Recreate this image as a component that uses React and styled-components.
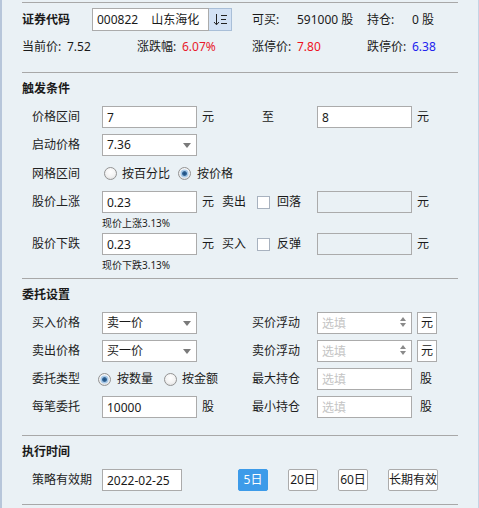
import React from 'react';
import styled, { createGlobalStyle } from 'styled-components';

const GlobalStyle = createGlobalStyle`
  html, body { margin: 0; padding: 0; background: #eaf1f5; }
  body {
    font-family: "Noto Sans", "Noto Sans CJK SC", sans-serif;
    font-size: 12px;
    color: #1a1a1a;
  }
  * { box-sizing: border-box; }
`;

const Panel = styled.div`
  width: 479px;
  height: 508px;
  background: #eaf1f5;
  border-left: 2px solid #b7c6da;
  border-right: 1px solid #c5d3e4;
  padding: 2px 0 0 20px;
  overflow: hidden;
`;

const Inner = styled.div`
  width: 436px;
`;

const Section = styled.section`
  border-top: 1px solid #a8a8a8;
  padding: ${p => (p.$pt ?? 8)}px 0 ${p => p.$pb}px;
  ${p => p.$last && 'border-bottom: 1px solid #a8a8a8;'}
`;

const Title = styled.div`
  font-weight: bold;
  line-height: 16px;
  margin-bottom: 9px;
`;

const Stack = styled.div`
  display: flex;
  flex-direction: column;
  gap: 6px;
`;

/* header */
const HeadRow1 = styled.div`
  display: grid;
  grid-template-columns: 70px 160px 115px auto;
  align-items: center;
  height: 23px;
`;

const HeadRow2 = styled.div`
  display: grid;
  grid-template-columns: repeat(4, 115px);
  align-items: center;
  height: 16px;
  margin-top: 8px;
`;

const BoldLabel = styled.span`
  font-weight: bold;
  line-height: 16px;
`;

const Info = styled.div`
  display: flex;
  align-items: center;
  line-height: 16px;
  white-space: nowrap;
`;

const InfoLabel = styled.span`
  width: 45px;
  flex: none;
`;

const InfoValue = styled.span`
  color: ${p => p.$color || '#1a1a1a'};
`;

const CodeGroup = styled.div`
  display: flex;
  height: 23px;
`;

const CodeBox = styled.div`
  width: 117px;
  height: 23px;
  border: 1px solid #ababab;
  background: #fff;
  display: flex;
  align-items: center;
  padding-left: 4px;
  gap: 13px;
  white-space: nowrap;
  line-height: 16px;
`;

const SortButton = styled.button`
  width: 23px;
  height: 23px;
  border: 1px solid #a9bfd8;
  border-left: none;
  background: #d3e2f5;
  padding: 0;
  display: flex;
  align-items: center;
  justify-content: center;
`;

/* form rows */
const Row = styled.div`
  display: grid;
  grid-template-columns: 70px 95px 55px 65px 95px auto;
  align-items: center;
  height: ${p => p.$h || 22}px;
  padding-left: 10px;
`;

const Label = styled.span`
  line-height: 16px;
  white-space: nowrap;
  color: #222;
`;

const Cell = styled.div`
  display: flex;
  align-items: center;
  gap: ${p => p.$gap || 0}px;
  padding-left: ${p => p.$pl || 0}px;
  line-height: 16px;
  white-space: nowrap;
  ${p => p.$span && `grid-column: span ${p.$span};`}
`;

const Field = styled.input`
  width: ${p => p.$w || 95}px;
  height: 22px;
  border: 1px solid #ababab;
  background: ${p => (p.disabled ? 'transparent' : '#fff')};
  padding: 0 4px;
  font: inherit;
  color: #1a1a1a;
  outline: none;
  &::placeholder { color: #c4c4c4; }
`;

const SelectBox = styled.div`
  position: relative;
  width: 95px;
  height: 22px;
  border: 1px solid #ababab;
  background: #fff;
  padding: 0 4px;
  display: flex;
  align-items: center;
  line-height: 16px;
  &::after {
    content: '';
    position: absolute;
    right: 5px;
    top: 8px;
    border-left: 4px solid transparent;
    border-right: 4px solid transparent;
    border-top: 5px solid #7a7a7a;
  }
`;

const SpinWrap = styled.div`
  position: relative;
  width: 95px;
  height: 22px;
`;

const SpinArrows = styled.div`
  position: absolute;
  right: 6px;
  top: 5px;
  display: flex;
  flex-direction: column;
  gap: 2px;
  &::before, &::after {
    content: '';
    border-left: 3.5px solid transparent;
    border-right: 3.5px solid transparent;
  }
  &::before { border-bottom: 4px solid #8a8a8a; }
  &::after { border-top: 4px solid #8a8a8a; }
`;

const UnitButton = styled.button`
  width: 20px;
  height: 22px;
  margin-left: 5px;
  padding: 0;
  border: 1px solid #ababab;
  background: #fff;
  font: inherit;
  color: #1a1a1a;
  line-height: 20px;
`;

const Check = styled.span`
  width: 13px;
  height: 13px;
  flex: none;
  border: 1px solid #a8b2bf;
  background: #fff;
`;

const RadioOption = styled.label`
  display: flex;
  align-items: center;
  gap: ${p => p.$gap || 5}px;
  margin-left: ${p => p.$ml || 0}px;
  line-height: 16px;
`;

const RadioDot = styled.span`
  width: 13px;
  height: 13px;
  flex: none;
  border-radius: 50%;
  border: 1px solid #939393;
  background: radial-gradient(circle at 50% 35%, #ffffff 0%, #f2f2f2 55%, #d6d6d6 100%);
  display: flex;
  align-items: center;
  justify-content: center;
  &::after {
    content: '';
    width: 5px;
    height: 5px;
    border-radius: 50%;
    background: ${p => (p.$checked ? 'radial-gradient(circle, #1d4f80 0%, #3f74a8 100%)' : 'transparent')};
    box-shadow: ${p => (p.$checked ? '0 0 0 1.5px #a9cbea' : 'none')};
  }
`;

const Hint = styled.div`
  font-size: 10px;
  line-height: 12px;
  padding-left: 80px;
  margin: 4px 0 -2px;
  color: #222;
`;

/* execution time */
const TimeRow = styled.div`
  display: flex;
  align-items: center;
  height: 22px;
  padding-left: 10px;
`;

const TimeLabel = styled(Label)`
  width: 70px;
`;

const Periods = styled.div`
  display: flex;
  gap: 20px;
  margin-left: 56px;
`;

const PeriodButton = styled.button`
  height: 22px;
  min-width: 30px;
  padding: 0;
  border: 1px solid ${p => (p.$active ? '#3d9be9' : '#ababab')};
  border-radius: 2px;
  background: ${p => (p.$active ? '#3d9be9' : '#fff')};
  color: ${p => (p.$active ? '#fff' : '#1a1a1a')};
  font: inherit;
  line-height: 20px;
  white-space: nowrap;
`;

const SortIcon = () => (
  <svg width="15" height="13" viewBox="0 0 15 13">
    <path d="M3.5 1 V11.5 M1 9 L3.5 11.8 L6 9" stroke="#222" strokeWidth="1" fill="none" />
    <path d="M8 2.5 H14 M8 6.5 H13 M8 10.5 H14" stroke="#222" strokeWidth="1" fill="none" />
  </svg>
);

export default function App() {
  return (
    <>
      <GlobalStyle />
      <Panel>
        <Inner>
          <Section $pt={5} $pb={17}>
            <HeadRow1>
              <BoldLabel>证券代码</BoldLabel>
              <CodeGroup>
                <CodeBox>
                  <span>000822</span>
                  <span>山东海化</span>
                </CodeBox>
                <SortButton><SortIcon /></SortButton>
              </CodeGroup>
              <Info><InfoLabel>可买:</InfoLabel><InfoValue>591000 股</InfoValue></Info>
              <Info><InfoLabel>持仓:</InfoLabel><InfoValue>0 股</InfoValue></Info>
            </HeadRow1>
            <HeadRow2>
              <Info><InfoLabel>当前价:</InfoLabel><InfoValue>7.52</InfoValue></Info>
              <Info><InfoLabel>涨跌幅:</InfoLabel><InfoValue $color="#e8192c">6.07%</InfoValue></Info>
              <Info><InfoLabel>涨停价:</InfoLabel><InfoValue $color="#ee1122">7.80</InfoValue></Info>
              <Info><InfoLabel>跌停价:</InfoLabel><InfoValue $color="#2222ee">6.38</InfoValue></Info>
            </HeadRow2>
          </Section>

          <Section $pb={9}>
            <Title>触发条件</Title>
            <Stack>
              <Row>
                <Label>价格区间</Label>
                <Field defaultValue="7" />
                <Cell $pl={5}>元</Cell>
                <Cell $pl={10}>至</Cell>
                <Field defaultValue="8" />
                <Cell $pl={5}>元</Cell>
              </Row>
              <Row>
                <Label>启动价格</Label>
                <SelectBox>7.36</SelectBox>
              </Row>
              <Row $h={23}>
                <Label>网格区间</Label>
                <Cell $span={3}>
                  <RadioOption $ml={2}><RadioDot />按百分比</RadioOption>
                  <RadioOption $ml={8} $gap={6}><RadioDot $checked />按价格</RadioOption>
                </Cell>
              </Row>
              <div>
                <Row>
                  <Label>股价上涨</Label>
                  <Field defaultValue="0.23" />
                  <Cell $pl={5} $gap={8}><span>元</span><span>卖出</span></Cell>
                  <Cell $pl={5} $gap={7}><Check /><span>回落</span></Cell>
                  <Field disabled />
                  <Cell $pl={5}>元</Cell>
                </Row>
                <Hint>现价上涨3.13%</Hint>
              </div>
              <div>
                <Row>
                  <Label>股价下跌</Label>
                  <Field defaultValue="0.23" />
                  <Cell $pl={5} $gap={8}><span>元</span><span>买入</span></Cell>
                  <Cell $pl={5} $gap={7}><Check /><span>反弹</span></Cell>
                  <Field disabled />
                  <Cell $pl={5}>元</Cell>
                </Row>
                <Hint>现价下跌3.13%</Hint>
              </div>
            </Stack>
          </Section>

          <Section $pb={17}>
            <Title>委托设置</Title>
            <Stack>
              <Row>
                <Label>买入价格</Label>
                <SelectBox>卖一价</SelectBox>
                <span />
                <Label>买价浮动</Label>
                <SpinWrap>
                  <Field placeholder="选填" />
                  <SpinArrows />
                </SpinWrap>
                <Cell><UnitButton>元</UnitButton></Cell>
              </Row>
              <Row>
                <Label>卖出价格</Label>
                <SelectBox>买一价</SelectBox>
                <span />
                <Label>卖价浮动</Label>
                <SpinWrap>
                  <Field placeholder="选填" />
                  <SpinArrows />
                </SpinWrap>
                <Cell><UnitButton>元</UnitButton></Cell>
              </Row>
              <Row>
                <Label>委托类型</Label>
                <Cell $span={2}>
                  <RadioOption $ml={-4} $gap={6}><RadioDot $checked />按数量</RadioOption>
                  <RadioOption $ml={11}><RadioDot />按金额</RadioOption>
                </Cell>
                <Label>最大持仓</Label>
                <Field placeholder="选填" />
                <Cell $pl={8}>股</Cell>
              </Row>
              <Row>
                <Label>每笔委托</Label>
                <Field defaultValue="10000" />
                <Cell $pl={5}>股</Cell>
                <Label>最小持仓</Label>
                <Field placeholder="选填" />
                <Cell $pl={8}>股</Cell>
              </Row>
            </Stack>
          </Section>

          <Section $pb={13} $last>
            <Title>执行时间</Title>
            <TimeRow>
              <TimeLabel>策略有效期</TimeLabel>
              <Field $w={80} defaultValue="2022-02-25" />
              <Periods>
                <PeriodButton $active>5日</PeriodButton>
                <PeriodButton>20日</PeriodButton>
                <PeriodButton>60日</PeriodButton>
                <PeriodButton>长期有效</PeriodButton>
              </Periods>
            </TimeRow>
          </Section>
        </Inner>
      </Panel>
    </>
  );
}
